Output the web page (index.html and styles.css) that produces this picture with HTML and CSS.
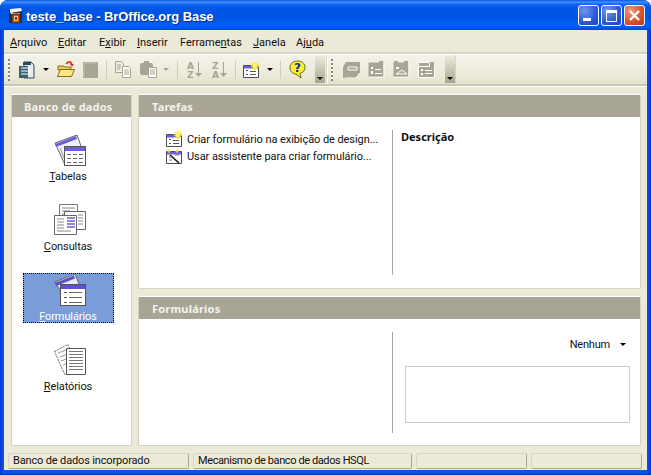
FILE: index.html
```html
<!DOCTYPE html>
<html lang="pt">
<head>
<meta charset="utf-8">
<title>teste_base - BrOffice.org Base</title>
<link rel="stylesheet" href="styles.css">
</head>
<body>
<svg class="defs" width="0" height="0">
  <defs>
    <symbol id="form-new" viewBox="0 0 17 16">
      <path d="M.5 3.500h15v12H.5z" fill="#fff" stroke="#4a4a5a"/>
      <path d="M1 4h14v2.500H1z" fill="#6a5fd8"/>
      <path d="M3 8.500h2M3 12.500h2M7 9.500h6M7 12.500h6" fill="none" stroke="#555" stroke-width="1"/>
      <path d="M12 0v8M8 4h8M9 1l6 6M15 1l-6 6" stroke="#ffe820" stroke-width="1.400"/>
      <circle cx="12" cy="4" r="2.200" fill="#fff46a"/>
    </symbol>
    <symbol id="form-wizard" viewBox="0 0 17 15">
      <path d="M.5 2.500h15v12H.5z" fill="#fff" stroke="#4a4a5a"/>
      <path d="M1 3h14v2.500H1z" fill="#6a5fd8"/>
      <path d="M4 6l9 8" stroke="#111" stroke-width="1.600"/>
      <path d="M3 8h3M3 11h3M9 6h4" stroke="#777"/>
      <path d="M3 0v4M1 2h4M11 0v4M9 2h4" stroke="#ffe820"/>
    </symbol>
    <symbol id="grey-form" viewBox="0 0 17 17">
      <path d="M.5 1.500h15v14H.5z" fill="#a9a596"/>
      <path d="M16 2v15H1" fill="none" stroke="#fff"/>
      <path d="M3 6h2v2H3zM3 10h2v3H3z" fill="#fff"/>
      <path d="M7 8.500h6M7 12.500h7" stroke="#fff"/>
      <path d="M11 0h4v2h-4z" fill="#a9a596"/>
    </symbol>
  </defs>
</svg>

<div class="window">
  <header class="titlebar">
    <svg class="app-icon" width="16" height="17" viewBox="0 0 16 17">
      <path d="M1 3h13v13H1z" fill="#22303c"/>
      <path d="M2 2l11-1 1 3-12 2z" fill="#f4f4f4"/>
      <path d="M3 6h9v1H3z" fill="#ddd"/>
      <rect x="4" y="7" width="8" height="9" rx="1.500" fill="#b8501f" stroke="#4a2412"/>
      <path d="M6 9h4v5H6z" fill="#f0c090"/>
      <path d="M7 10h2v3H7z" fill="#8a3512"/>
    </svg>
    <span class="title-text">teste_base - BrOffice.org Base</span>
    <div class="win-buttons">
      <div class="win-btn">
        <svg width="19" height="19" viewBox="0 0 19 19"><path d="M4 12h8v3H4z" fill="#fff"/></svg>
      </div>
      <div class="win-btn">
        <svg width="19" height="19" viewBox="0 0 19 19"><path d="M4.500 5.500h10v10h-10z" fill="none" stroke="#fff"/><path d="M4 4h11v3H4z" fill="#fff"/></svg>
      </div>
      <div class="win-btn win-close">
        <svg width="19" height="19" viewBox="0 0 19 19"><path d="M5 5l9 9M14 5l-9 9" stroke="#fff" stroke-width="2.400"/></svg>
      </div>
    </div>
  </header>

  <nav class="menubar">
    <span class="menu-item mi-1"><u>A</u>rquivo</span>
    <span class="menu-item mi-2"><u>E</u>ditar</span>
    <span class="menu-item mi-3">E<u>x</u>ibir</span>
    <span class="menu-item mi-4"><u>I</u>nserir</span>
    <span class="menu-item mi-5">Ferrame<u>n</u>tas</span>
    <span class="menu-item mi-6"><u>J</u>anela</span>
    <span class="menu-item mi-7">Aj<u>u</u>da</span>
  </nav>

  <div class="toolbar">
    <div class="tb-group tb-group-main">
      <span class="handle"></span>
      <svg class="ti ti-new" width="18" height="18" viewBox="0 0 18 18">
        <path d="M6 1h7l3 3v13H6z" fill="#e4eaee" stroke="#2e4a5c"/>
        <path d="M1 5h9v12H1z" fill="#3c5f76"/>
        <path d="M3 7h9M3 10h10M3 13h10" stroke="#fff"/>
        <path d="M5 1h8v3H5z" fill="#2e4a5c"/>
      </svg>
      <span class="arrow arrow-new"></span>
      <svg class="ti ti-open" width="18" height="17" viewBox="0 0 18 17">
        <path d="M1 5h6l1 1h6v3H1z" fill="#e8c860" stroke="#8a6a18"/>
        <path d="M.5 15.500l3-7h14l-3 7z" fill="#ffe680" stroke="#8a6a18"/>
        <path d="M9 3c2-3 5-3 6 1" fill="none" stroke="#e03020" stroke-width="1.600"/>
        <path d="M13 3h4l-2 3z" fill="#e03020"/>
      </svg>
      <svg class="ti ti-save" width="15" height="16" viewBox="0 0 15 16">
        <path d="M0 0h15v16H0z" fill="#a9a596"/>
        <path d="M1 1h13M1 1v14" stroke="#c4c1b4" fill="none"/>
      </svg>
      <span class="sep sep-a"></span>
      <svg class="ti ti-copy" width="17" height="17" viewBox="0 0 17 17">
        <path d="M.5.500h6l2 2v9h-8z" fill="#eeecdf" stroke="#a9a596"/>
        <path d="M2 4h4M2 6h4M2 8h3" stroke="#a9a596"/>
        <path d="M7.500 5.500h6l2 2v9h-8z" fill="#fff" stroke="#a9a596"/>
        <path d="M9 9h5M9 11h5M9 13h5" stroke="#a9a596"/>
      </svg>
      <svg class="ti ti-paste" width="18" height="17" viewBox="0 0 18 17">
        <rect x="0" y="2" width="13" height="12" rx="2" fill="#a9a596"/>
        <path d="M4 0h5v3H4z" fill="#a9a596"/>
        <path d="M8.500 6.500h8v10h-8z" fill="#fff" stroke="#a9a596"/>
        <path d="M10 9h5M10 11h5M10 13h5" stroke="#a9a596"/>
      </svg>
      <span class="arrow arrow-off arrow-paste"></span>
      <span class="sep sep-b"></span>
      <svg class="ti ti-az" width="16" height="18" viewBox="0 0 16 18">
        <text class="sort-letter" x="0" y="8">A</text>
        <text class="sort-letter" x="0" y="17">Z</text>
        <path d="M11.500 1v13" stroke="#a9a596"/>
        <path d="M8 12h7l-3.500 4z" fill="#a9a596"/>
      </svg>
      <svg class="ti ti-za" width="16" height="18" viewBox="0 0 16 18">
        <text class="sort-letter" x="0" y="8">Z</text>
        <text class="sort-letter" x="0" y="17">A</text>
        <path d="M11.500 1v13" stroke="#a9a596"/>
        <path d="M8 12h7l-3.500 4z" fill="#a9a596"/>
      </svg>
      <span class="sep sep-c"></span>
      <svg class="ti ti-form" width="17" height="16"><use href="#form-new"/></svg>
      <span class="arrow arrow-form"></span>
      <span class="sep sep-d"></span>
      <svg class="ti ti-help" width="17" height="19" viewBox="0 0 17 19">
        <path d="M8.500 1C4 1 1 3.500 1 7.500s3 6.500 6 6.500l5 4-1-4.500c3-1 5-3 5-6C16 3.500 13 1 8.500 1z" fill="#ffee30" stroke="#6a6a20"/>
        <text class="help-q" x="5" y="12">?</text>
      </svg>
      <span class="grip grip-a"><span class="arrow"></span></span>
    </div>
    <div class="tb-group tb-group-form">
      <span class="handle handle-b"></span>
      <svg class="ti ti-g1" width="17" height="17" viewBox="0 0 17 17">
        <path d="M3 1h14v11l-4 5H0V6z" fill="#a9a596"/>
        <path d="M5 6h9v3H5z" fill="none" stroke="#fff"/>
        <path d="M17 12l-4 5H2" fill="none" stroke="#fff"/>
      </svg>
      <svg class="ti ti-g2" width="17" height="17"><use href="#grey-form"/></svg>
      <svg class="ti ti-g3" width="17" height="17" viewBox="0 0 17 17">
        <path d="M.5 1.500h15v14H.5z" fill="#a9a596"/>
        <path d="M16 2v15H1" fill="none" stroke="#fff"/>
        <path d="M3 6h3v2H3z" fill="#fff"/>
        <path d="M3 13l6-4 5 4M3 13h11" fill="none" stroke="#fff"/>
        <path d="M1 0h4v2H1zM11 0h4v2h-4z" fill="#a9a596"/>
      </svg>
      <svg class="ti ti-g4" width="17" height="17" viewBox="0 0 17 17">
        <path d="M0 1h16v15H0z" fill="#a9a596"/>
        <path d="M.5 1.500h11v4H.5z" fill="none" stroke="#fff"/>
        <path d="M16.500 5v11.500H.5V5" fill="none" stroke="#fff"/>
        <path d="M3 8h2v2H3zM3 12h2v2H3z" fill="#fff"/>
        <path d="M7 9.500h7M7 12.500h7" stroke="#fff"/>
      </svg>
      <span class="grip grip-b"><span class="arrow"></span></span>
    </div>
  </div>

  <main class="workspace">
    <section class="panel panel-db">
      <h2 class="panel-head">Banco de dados</h2>
      <div class="db-list">
        <div class="db-item">
          <svg class="db-icon" width="32" height="32" viewBox="0 0 32 32">
            <path d="M1 9L23 1l4 11-16 19z" fill="#f2f2f6" stroke="#666"/>
            <path d="M1 10L22 2l1 3L2 13z" fill="#6a5fd8"/>
            <path d="M6 14l4 10M10 12l3 4" stroke="#999"/>
            <rect x="10.500" y="12.500" width="21" height="19" fill="#fff" stroke="#555"/>
            <path d="M11 13h20v4H11z" fill="#6a5fd8"/>
            <path d="M13 20.500h4M19 20.500h4M25 20.500h4M13 24.500h4M19 24.500h4M25 24.500h4M13 28.500h4M19 28.500h4M25 28.500h4" stroke="#666"/>
          </svg>
          <span class="db-label"><u>T</u>abelas</span>
        </div>
        <div class="db-item">
          <svg class="db-icon" width="32" height="32" viewBox="0 0 32 32">
            <path d="M5.500.5h18v18h-18z" fill="#fff" stroke="#777"/>
            <path d="M8 4h13M8 7h8M8 10h4" stroke="#888"/>
            <path d="M10.500 7.500h21v18h-21z" fill="#fff" stroke="#666"/>
            <path d="M24 11h5M24 14h5M24 17h5M24 20h5" stroke="#888"/>
            <path d="M.5 11.500h22v19H.5z" fill="#fff" stroke="#666"/>
            <path d="M3 15h7M3 18h7M3 21h7M3 24h7M3 27h14" stroke="#888"/>
            <path d="M13 14h8M13 17h8M13 20h8M13 23h8" stroke="#6a5fd8" stroke-width="1.500"/>
          </svg>
          <span class="db-label"><u>C</u>onsultas</span>
        </div>
        <div class="db-item db-selected">
          <svg class="db-icon" width="32" height="32" viewBox="0 0 32 32">
            <path d="M1 8L21 0l4 10-14 14z" fill="#e8e8f0" stroke="#666"/>
            <path d="M1 9L20 1.500l1 3L2 12z" fill="#5d50d0"/>
            <rect x="6.500" y="10.500" width="25" height="21" fill="#fff" stroke="#555"/>
            <path d="M7 11h24v4H7z" fill="#5d50d0"/>
            <path d="M10 18.500h3M10 23.500h3M10 28.500h3" stroke="#555"/>
            <path d="M15 18.500h13M15 23.500h13M15 28.500h13" stroke="#666"/>
          </svg>
          <span class="db-label"><u>F</u>ormulários</span>
        </div>
        <div class="db-item">
          <svg class="db-icon" width="32" height="32" viewBox="0 0 32 32">
            <path d="M.5 7.500L14 .5 24 26l-13 5z" fill="#fff" stroke="#666" stroke-dasharray="2 1"/>
            <path d="M4 9l8-3M6 13l8-3M7 17l8-3M9 21l8-3" stroke="#999"/>
            <path d="M12.500 4.500h19v26h-19z" fill="#fff" stroke="#555"/>
            <path d="M15 7.500h14M15 10.500h14M15 13.500h14M15 16.500h14M15 19.500h14M15 22.500h14M15 25.500h14" stroke="#777"/>
          </svg>
          <span class="db-label"><u>R</u>elatórios</span>
        </div>
      </div>
    </section>

    <div class="right-col">
      <section class="panel panel-tasks">
        <h2 class="panel-head panel-head-wide">Tarefas</h2>
        <div class="panel-split panel-split-tasks">
          <div class="task-list">
            <div class="task"><svg width="17" height="16"><use href="#form-new"/></svg><span>Criar formulário na exibição de design...</span></div>
            <div class="task"><svg width="17" height="15"><use href="#form-wizard"/></svg><span>Usar assistente para criar formulário...</span></div>
          </div>
          <div class="pane-right">
            <strong class="desc-title">Descrição</strong>
          </div>
        </div>
      </section>

      <section class="panel panel-forms">
        <h2 class="panel-head panel-head-wide">Formulários</h2>
        <div class="panel-split panel-split-forms">
          <div class="forms-left"></div>
          <div class="pane-right pane-preview">
            <div class="preview-select"><span>Nenhum</span><span class="arrow"></span></div>
            <div class="preview-box"></div>
          </div>
        </div>
      </section>
    </div>
  </main>

  <footer class="statusbar">
    <div class="status-cell status-a">Banco de dados incorporado</div>
    <div class="status-cell status-b">Mecanismo de banco de dados HSQL</div>
    <div class="status-cell status-c"></div>
    <div class="status-cell status-d"></div>
  </footer>
</div>
</body>
</html>
```

FILE: styles.css
```css
* { box-sizing: border-box; }
html, body { margin: 0; height: 100%; background: #fff; }
body { font-family: Roboto, "Liberation Sans", sans-serif; font-size: 11px; color: #111; overflow: hidden; }
.defs { display: block; height: 0; }
.window {
  height: 475px; width: 651px; display: flex; flex-direction: column;
  padding: 0 4px 4px; border-radius: 8px 8px 0 0;
  background: linear-gradient(90deg, #0831d9 0, #0855dd 3px, #0855dd 647px, #0831d9 100%);
  border-bottom: 1px solid #0030b8;
}
.titlebar {
  height: 30px; margin: 0 -4px; padding: 0 6px 0 8px; display: flex; align-items: center; flex: none;
  border-radius: 8px 8px 0 0;
  background: linear-gradient(180deg, #0a56d8 0, #3c8eff 2px, #0a60ee 5px, #0055e5 9px, #0054e3 18px, #0060f4 25px, #0058e8 28px, #0046c8 30px);
}
.app-icon { flex: none; }
.title-text {
  margin-left: 2px; padding-top: 2px; font-family: "Liberation Sans", sans-serif; font-weight: 700; font-size: 13px; letter-spacing: -.06px; color: #fff;
  text-shadow: 1px 1px 1px #0a2a8c;
}
.win-buttons { margin-left: auto; display: flex; gap: 2px; }
.win-btn {
  width: 21px; height: 21px; border: 1px solid #fff; border-radius: 3px; display: flex;
  background: radial-gradient(circle at 30% 25%, #6f97ee, #2a58d8 60%, #1f46c0);
}
.win-close { background: radial-gradient(circle at 30% 25%, #ea9a80, #d8502a 60%, #b8381a); }

.menubar {
  height: 24px; flex: none; display: flex; align-items: center; padding: 1px 0 0 6px;
  background: #ece9d8; border-bottom: 1px solid #d8d5c5; box-shadow: inset 0 -1px 0 #d8d5c5; color: #111;
}
.menu-item { flex: none; white-space: nowrap; }
.mi-1 { width: 48px; }
.mi-2 { width: 41px; }
.mi-3 { width: 38px; }
.mi-4 { width: 43px; }
.mi-5 { width: 73px; }
.mi-6 { width: 43px; }

.toolbar {
  height: 32px; flex: none; display: flex; align-items: stretch;
  background: linear-gradient(180deg, #f4f3ea, #ece9d8 70%, #e4e1cf);
  border-top: 1px solid #fff; border-bottom: 2px solid #c9c6b4;
}
.tb-group { display: flex; align-items: center; position: relative; flex: none; }
.tb-group-main { width: 323px; border-right: 1px solid #d8d5c5; }
.tb-group-form { width: 129px; border-left: 1px solid #fff; border-right: 1px solid #d8d5c5; }
.handle {
  width: 2px; height: 22px; margin-left: 4px; flex: none;
  background: repeating-linear-gradient(180deg, #8a8878 0 2px, #fff 2px 3px, transparent 3px 4px);
}
.handle-b { margin-left: 3px; }
.ti { flex: none; }
.ti-new { margin-left: 8px; }
.arrow { width: 0; height: 0; flex: none; border: 3px solid transparent; border-top: 3px solid #000; border-bottom: 0; }
.arrow-off { border-top-color: #a9a596; }
.arrow-new { margin-left: 7px; }
.ti-open { margin-left: 8px; }
.ti-save { margin-left: 8px; }
.sep { width: 1px; height: 18px; background: #cfccbc; flex: none; }
.sep-a { margin-left: 8px; }
.ti-copy { margin-left: 8px; }
.ti-paste { margin-left: 8px; }
.arrow-paste { margin-left: 5px; }
.sep-b { margin-left: 8px; }
.ti-az { margin-left: 9px; }
.ti-za { margin-left: 9px; }
.sep-c { margin-left: 7px; }
.ti-form { margin-left: 7px; }
.arrow-form { margin-left: 7px; }
.sep-d { margin-left: 7px; }
.ti-help { margin-left: 8px; }
.sort-letter { font: 700 9px "DejaVu Sans", sans-serif; fill: #a9a596; }
.help-q { font: 700 12px "DejaVu Sans", sans-serif; fill: #1030b0; }
.grip {
  width: 10px; height: 27px; flex: none; display: flex; align-items: flex-end; justify-content: center; padding-bottom: 3px;
  background: linear-gradient(180deg, #ece9d8, #a9a596);
}
.grip-a { margin-left: 9px; }
.grip-b { margin-left: 10px; }
.ti-g1 { margin-left: 10px; }
.ti-g2, .ti-g3, .ti-g4 { margin-left: 8px; }

.workspace {
  flex: 1; min-height: 0; display: flex; gap: 6px; padding: 7px 6px 5px 7px; background: #ece9d8; border-top: 1px solid #fff;
}
.panel { background: #fff; border: 1px solid #d6d3c7; border-top-color: #fff; display: flex; flex-direction: column; }
.panel-head { margin: 0; height: 22px; display: flex; align-items: center; font-family: "Noto Sans", sans-serif; font-size: 11px; font-weight: 700; color: #f4f3ee; background: #a9a596; flex: none; letter-spacing: .2px; }
.panel-db { width: 121px; flex: none; }
.panel-db .panel-head { padding-left: 12px; }
.panel-head-wide { padding-left: 13px; }
.db-list { display: flex; flex-direction: column; align-items: center; gap: 20px; padding: 16px 7px 0 0; }
.db-item { width: 91px; height: 50px; display: flex; flex-direction: column; align-items: center; color: #111; }
.db-icon { flex: none; margin: 1px 0 0 3px; }
.db-label { margin-top: 4px; line-height: 14px; letter-spacing: -.1px; }
.db-selected { background: #7a9cd8; outline: 1px dotted #000; outline-offset: -1px; color: #fff; }
.right-col { flex: 1; min-width: 0; display: flex; flex-direction: column; gap: 7px; }
.panel-tasks { height: 195px; flex: none; }
.panel-forms { flex: 1; min-height: 0; }
.panel-split { flex: 1; min-height: 0; display: grid; grid-template-columns: 253px 1fr; padding-right: 10px; }
.panel-split-tasks { padding-top: 13px; padding-bottom: 13px; }
.panel-split-forms { padding-top: 13px; padding-bottom: 12px; }
.task-list { padding: 1px 0 0 27px; display: flex; flex-direction: column; gap: 1px; letter-spacing: -.07px; }
.task { height: 16px; display: flex; align-items: center; gap: 4px; white-space: nowrap; color: #111; }
.task svg { flex: none; }
.pane-right { border-left: 1px solid #a9a596; padding-left: 8px; }
.desc-title { display: block; font-family: "Noto Sans", sans-serif; font-size: 11px; font-weight: 700; line-height: 14px; }
.pane-preview { padding: 0 0 0 12px; display: flex; flex-direction: column; align-items: stretch; }
.preview-select { height: 23px; padding: 1px 4px 0 0; display: flex; align-items: center; justify-content: flex-end; gap: 10px; letter-spacing: -.2px; }
.preview-box { height: 57px; margin-top: 11px; border: 1px solid #d0ccc0; background: #fff; }

.statusbar { height: 19px; flex: none; display: flex; gap: 4px; padding: 2px 1px 1px 4px; background: #ece9d8; }
.status-cell { height: 16px; border: 1px solid #aca899; border-top-color: #d8d5c5; border-left-color: #d8d5c5; border-radius: 2px; padding-left: 4px; line-height: 14px; white-space: nowrap; }
.status-a { width: 181px; letter-spacing: -.15px; }
.status-b { width: 219px; letter-spacing: -.4px; }
.status-c { width: 111px; }
.status-d { width: 111px; }
```
